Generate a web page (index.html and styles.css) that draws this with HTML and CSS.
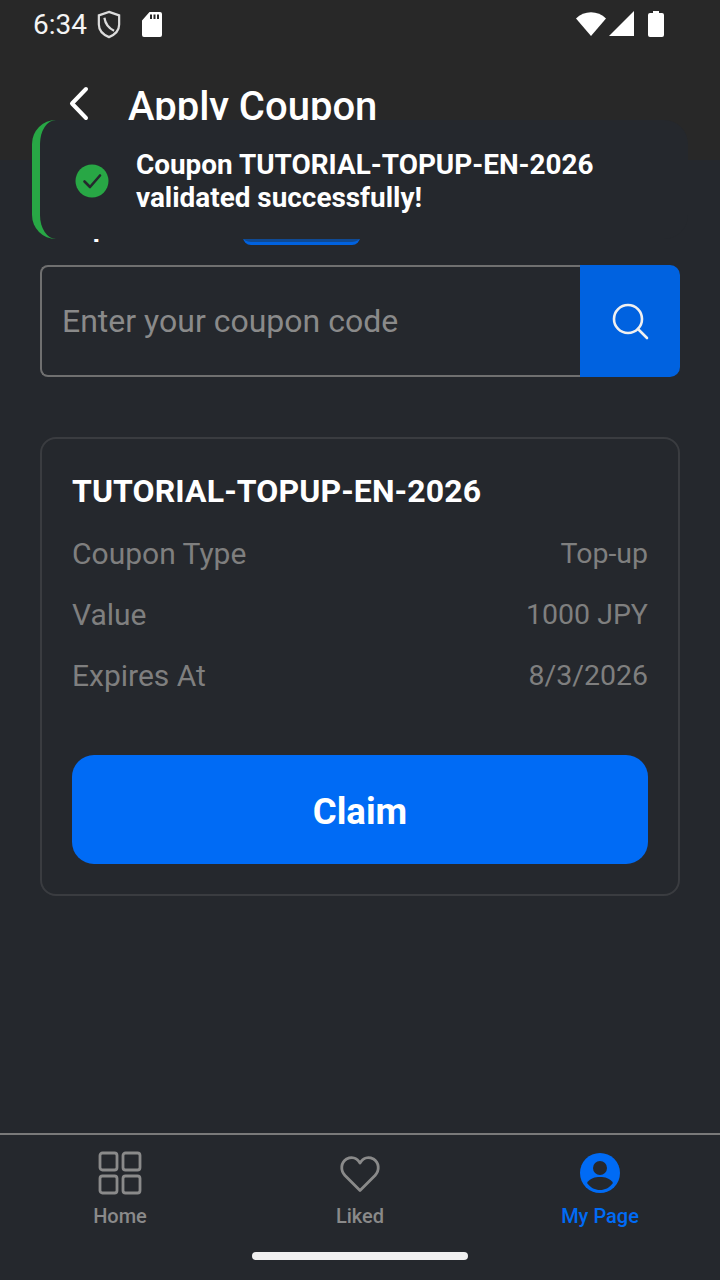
FILE: index.html
```html
<!DOCTYPE html>
<html lang="en">
<head>
    <meta charset="UTF-8">
    <meta name="viewport" content="width=device-width, initial-scale=1.0">
    <title>Apply Coupon</title>
    <link rel="stylesheet" href="styles.css">
</head>
<body>
    <div class="screen">
        <header class="top">
            <div class="status">
                <span class="time">6:34</span>
                <svg class="ic-shield" width="24" height="29" viewBox="0 0 26 30" preserveAspectRatio="none" fill="none" stroke="#dcdcdc" stroke-width="2.4">
                    <path d="M13 2 L24 5.5 V15 C24 21 19.5 25.5 13 28 C6.5 25.5 2 21 2 15 V5.5 Z"/>
                    <path d="M8 8 C9 14 13 19 18.5 21.5"/>
                </svg>
                <svg class="ic-sd" width="20" height="25" viewBox="0 0 20 25">
                    <path fill="#fff" fill-rule="evenodd" d="M7.5 0 H18 a2 2 0 0 1 2 2 V23 a2 2 0 0 1 -2 2 H2 a2 2 0 0 1 -2 -2 V8.5 Z M8 2.5 V7 H10 V2.5 Z M11.5 2.5 V7 H13.5 V2.5 Z M15 2.5 V7 H17 V2.5 Z"/>
                </svg>
                <span class="status-right">
                    <svg width="30" height="26" viewBox="0 0 30 26"><path fill="#fff" d="M0 7.5 C8 -1 22 -1 30 7.5 L15 25 Z"/></svg>
                    <svg width="25" height="26" viewBox="0 0 25 26"><path fill="#fff" d="M25 0 V25 H0 Z"/></svg>
                    <svg class="ic-batt" width="16" height="26" viewBox="0 0 16 26"><path fill="#fff" d="M5 0 H11 V2 H14 a2 2 0 0 1 2 2 V24 a2 2 0 0 1 -2 2 H2 a2 2 0 0 1 -2 -2 V4 a2 2 0 0 1 2 -2 H5 Z"/></svg>
                </span>
            </div>
            <div class="titlebar">
                <svg width="24" height="36" viewBox="0 0 24 36" fill="none" stroke="#fff" stroke-width="4" stroke-linecap="round" stroke-linejoin="round">
                    <path d="M18 3 L4 17.5 L18 32"/>
                </svg>
                <h1>Apply Coupon</h1>
            </div>
        </header>

        <div class="toast">
            <svg class="toast-icon" width="34" height="34" viewBox="0 0 34 34">
                <circle cx="17" cy="17" r="16.5" fill="#28a745"/>
                <path d="M9.5 17.5 L15 23 L25 11.5" fill="none" stroke="#25282d" stroke-width="2.6" stroke-linecap="round" stroke-linejoin="round"/>
            </svg>
            <p>Coupon TUTORIAL-TOPUP-EN-2026<br>validated successfully!</p>
        </div>

        <main class="content">
            <div class="tabs">
                <span class="tab-label">Top</span>
                <span class="tab-active"></span>
            </div>

            <form class="search">
                <div class="search-input">Enter your coupon code</div>
                <button type="button" class="search-btn">
                    <svg width="38" height="38" viewBox="0 0 38 38" fill="none" stroke="#f0f0f0" stroke-width="2.6" stroke-linecap="round">
                        <circle cx="17" cy="17" r="14"/>
                        <path d="M27 27 L36 36"/>
                    </svg>
                </button>
            </form>

            <section class="card">
                <h2>TUTORIAL-TOPUP-EN-2026</h2>
                <div class="row"><span>Coupon Type</span><span class="val">Top-up</span></div>
                <div class="row"><span>Value</span><span class="val">1000 JPY</span></div>
                <div class="row"><span>Expires At</span><span class="val">8/3/2026</span></div>
                <button type="button" class="claim">Claim</button>
            </section>
        </main>

        <nav class="bottom">
            <div class="nav-item">
                <svg width="44" height="44" viewBox="0 0 44 44" fill="none" stroke="#8a8a8a" stroke-width="2.8">
                    <rect x="2" y="2" width="17" height="17" rx="2.5"/>
                    <rect x="25" y="2" width="17" height="17" rx="2.5"/>
                    <rect x="2" y="25" width="17" height="17" rx="2.5"/>
                    <rect x="25" y="25" width="17" height="17" rx="2.5"/>
                </svg>
                <span>Home</span>
            </div>
            <div class="nav-item">
                <svg width="44" height="44" viewBox="0 0 44 44" fill="none" stroke="#8a8a8a" stroke-width="2.8" stroke-linejoin="round">
                    <path d="M22 39.5 L7 24.5 C2 19 3 11.5 8.5 8 C13.5 5.5 19 6.5 22 12 C25 6.5 30.5 5.5 35.5 8 C41 11.5 42 19 37 24.5 Z"/>
                </svg>
                <span>Liked</span>
            </div>
            <div class="nav-item active">
                <svg width="44" height="44" viewBox="0 0 44 44">
                    <circle cx="22" cy="22" r="20" fill="#006bf5"/>
                    <circle cx="22" cy="17" r="7" fill="#25282d"/>
                    <path d="M9 32 C12 27 17 26 22 26 C27 26 32 27 35 32 C31 37 27 39 22 39 C17 39 13 37 9 32 Z" fill="#25282d"/>
                </svg>
                <span>My Page</span>
            </div>
        </nav>
        <div class="home-bar"></div>
    </div>
</body>
</html>
```

FILE: styles.css
```css
body {
    font-family: Roboto, "Liberation Sans", sans-serif;
    margin: 0;
    padding: 0;
    background-color: #25282d;
}
.screen {
    position: relative;
    width: 720px;
    height: 1280px;
    overflow: hidden;
    display: flex;
    flex-direction: column;
    background: #25282d;
}
.top {
    height: 160px;
    flex-shrink: 0;
    background: #282828;
    color: #fff;
}
.status {
    height: 48px;
    padding: 0 56px 0 33px;
    display: flex;
    align-items: center;
}
.time {
    font-size: 28px;
    color: #f4f4f4;
    margin-right: 10px;
}
.ic-sd {
    margin-left: 21px;
}
.status-right {
    margin-left: auto;
    display: flex;
    align-items: center;
    gap: 3px;
}
.ic-batt {
    margin-left: 11px;
}
.titlebar {
    height: 112px;
    padding-left: 68px;
    display: flex;
    align-items: center;
    gap: 36px;
}
.titlebar h1 {
    margin: 6px 0 0;
    font-size: 40px;
    font-weight: 500;
    line-height: 44px;
}
.toast {
    position: absolute;
    z-index: 1;
    left: 32px;
    top: 120px;
    width: 656px;
    height: 119px;
    box-sizing: border-box;
    padding: 0 20px 0 35px;
    display: flex;
    align-items: center;
    gap: 27px;
    background: #25282d;
    border-left: 8px solid #28a745;
    border-radius: 24px;
}
.toast-icon {
    margin-top: 2px;
}
.toast p {
    margin: 2px 0 0;
    color: #fff;
    font-size: 27.9px;
    font-weight: 700;
    line-height: 33px;
}
.content {
    flex: 1;
    padding: 0 40px;
}
.tabs {
    height: 85px;
    position: relative;
}
.tab-label {
    position: absolute;
    left: 22px;
    top: 50px;
    font-size: 28px;
    font-weight: 700;
    line-height: 34px;
    color: #fff;
}
.tab-active {
    position: absolute;
    left: 203px;
    top: 25px;
    width: 117px;
    height: 60px;
    box-sizing: border-box;
    border-radius: 8px;
    background: #0f4a94;
    border-bottom: 3px solid #0062e0;
}
.search {
    display: flex;
    height: 112px;
    margin: 20px 0 60px;
}
.search-input {
    flex: 1;
    box-sizing: border-box;
    padding-left: 20px;
    display: flex;
    align-items: center;
    font-size: 32px;
    color: #8a8a8a;
    border: 2px solid #707070;
    border-right: none;
    border-radius: 8px 0 0 8px;
}
.search-btn {
    width: 100px;
    padding: 0;
    border: none;
    border-radius: 0 10px 10px 0;
    background: #0062e0;
    display: flex;
    align-items: center;
    justify-content: center;
}
.card {
    height: 459px;
    box-sizing: border-box;
    padding: 30px 30px;
    border: 2px solid #3a3c40;
    border-radius: 16px;
    display: flex;
    flex-direction: column;
}
.card h2 {
    margin: 0 0 10px;
    color: #fff;
    font-size: 32px;
    font-weight: 700;
    line-height: 44px;
    letter-spacing: 0.1px;
}
.row {
    display: flex;
    justify-content: space-between;
    height: 61px;
    line-height: 61px;
    font-size: 30px;
    color: #7f7f7f;
}
.val {
    font-size: 28.5px;
}
.claim {
    margin-top: 49px;
    height: 109px;
    flex-shrink: 0;
    padding-top: 4px;
    border: none;
    border-radius: 22px;
    background: #006bf5;
    color: #fff;
    font-family: inherit;
    font-size: 36.5px;
    font-weight: 700;
}
.bottom {
    height: 147px;
    flex-shrink: 0;
    box-sizing: border-box;
    border-top: 2px solid #7a7a7a;
    padding-top: 16px;
    display: flex;
}
.nav-item {
    flex: 1;
    display: flex;
    flex-direction: column;
    align-items: center;
    color: #8a8a8a;
    font-size: 20px;
    font-weight: 500;
    line-height: 24px;
}
.nav-item span {
    margin-top: 9px;
}
.nav-item.active {
    color: #006bf5;
}
.home-bar {
    position: absolute;
    left: 252px;
    bottom: 20px;
    width: 216px;
    height: 8px;
    border-radius: 4px;
    background: #f0f0f0;
}
```
